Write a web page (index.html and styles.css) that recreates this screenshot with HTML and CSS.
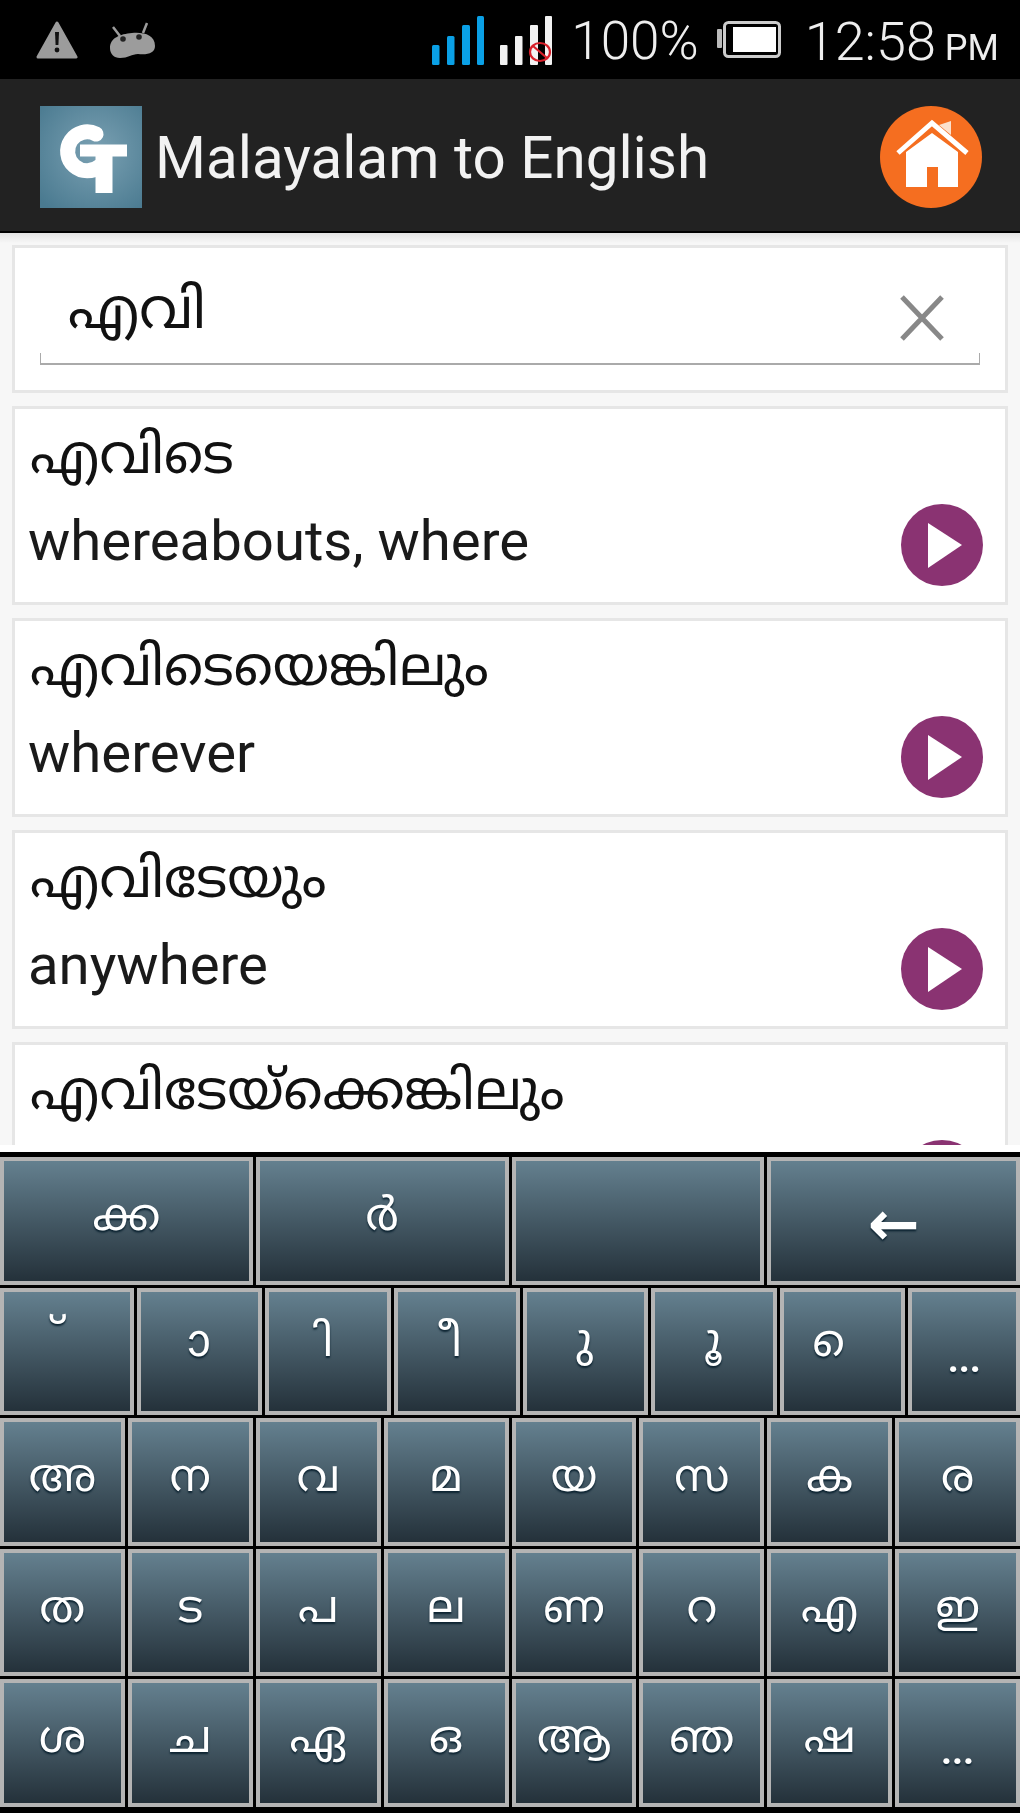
FILE: index.html
```html
<!DOCTYPE html>
<html lang="ml">
<head>
  <meta charset="UTF-8" />
  <meta name="viewport" content="width=device-width, initial-scale=1.0"/>
  <title>Malayalam to English</title>
  <link rel="stylesheet" href="styles.css">
</head>
<body>
  <div class="phone">

    <!-- Android status bar -->
    <div class="status-bar">
      <div class="status-left">
        <svg class="icon-warn" viewBox="0 0 42 38">
          <path d="M21 2 L40 36 H2 Z" fill="#9c9c9c" stroke="#9c9c9c" stroke-width="3" stroke-linejoin="round"/>
          <path d="M19 11 H23 L22.4 24 H19.6 Z" fill="#111"/>
          <circle cx="21" cy="29" r="2.4" fill="#111"/>
        </svg>
        <svg class="icon-android" viewBox="0 0 46 36">
          <path d="M3 5 L10 14 M37 1 L33 11" stroke="#9c9c9c" stroke-width="2.5"/>
          <path d="M0 26 C0 16 10 12 22 11 C34 10 45 13 45 24 C45 31 38 33 28 32 C22 32 18 36 10 36 C4 36 0 32 0 26 Z" fill="#9c9c9c"/>
          <circle cx="13" cy="17" r="2.8" fill="#222"/>
          <circle cx="29" cy="15" r="2.8" fill="#222"/>
        </svg>
      </div>
      <div class="status-right">
        <svg class="icon-signal" viewBox="0 0 52 50">
          <rect x="0" y="30" width="7.5" height="20" rx="1.5" fill="#0aa0e6"/>
          <rect x="15" y="21" width="7.5" height="29" rx="1.5" fill="#0aa0e6"/>
          <rect x="30" y="10" width="8" height="40" rx="1.5" fill="#0aa0e6"/>
          <rect x="45" y="1" width="7" height="49" rx="1.5" fill="#0aa0e6"/>
        </svg>
        <svg class="icon-signal" viewBox="0 0 52 50">
          <rect x="0" y="30" width="7.5" height="20" rx="1" fill="#f2f2f2"/>
          <rect x="15" y="21" width="7.5" height="29" rx="1" fill="#f2f2f2"/>
          <rect x="30" y="10" width="8" height="40" rx="1" fill="#f2f2f2"/>
          <rect x="45" y="1" width="7" height="49" rx="1" fill="#f2f2f2"/>
          <ellipse cx="40" cy="37" rx="10" ry="9" fill="none" stroke="#d8202a" stroke-width="2.2"/>
          <path d="M33 31 L47 43" stroke="#d8202a" stroke-width="2.2"/>
        </svg>
        <span class="status-pct">100%</span>
        <svg class="icon-battery" viewBox="0 0 64 37">
          <rect x="0" y="8" width="5" height="19" rx="1" fill="#bbb"/>
          <rect x="7.5" y="1.5" width="55" height="34" rx="4" fill="none" stroke="#ccc" stroke-width="3"/>
          <rect x="16" y="6" width="43" height="25" fill="#fff"/>
        </svg>
        <span class="status-time">12:58<small>PM</small></span>
      </div>
    </div>

    <!-- Action bar with logo, title and home button -->
    <div class="action-bar">
      <svg class="logo" viewBox="0 0 102 102">
        <defs>
          <radialGradient id="logoBg" cx="55%" cy="45%" r="72%">
            <stop offset="0" stop-color="#7ba1b3"/>
            <stop offset="1" stop-color="#4a7a90"/>
          </radialGradient>
        </defs>
        <rect width="102" height="102" fill="url(#logoBg)"/>
        <path d="M56 28 A19.5 19.5 0 1 0 60 60" fill="none" stroke="#fff" stroke-width="15" stroke-linecap="round"/>
        <path d="M40 44.5 H87" stroke="#fff" stroke-width="12"/>
        <path d="M64 44 V87" stroke="#fff" stroke-width="17"/>
      </svg>
      <div class="app-title">Malayalam to English</div>
      <svg class="home-btn" viewBox="0 0 102 102">
        <circle cx="51" cy="51" r="51" fill="#f56e20"/>
        <path d="M59 19 L71 15 V29 Z" fill="#fbe0cc"/>
        <path d="M18 47 L52 17 L87 47" fill="none" stroke="#fff" stroke-width="5"/>
        <path d="M26 46 L52 27 L78 46 V81 H58 V61 H47 V81 H26 Z" fill="#fff"/>
      </svg>
    </div>

    <!-- Search box and results list -->
    <div class="content">
      <div class="search-card">
        <div class="search-field">
          <span class="search-text">എവി</span>
          <svg class="clear-btn" viewBox="0 0 44 46">
            <path d="M2 2 L42 44 M42 2 L2 44" stroke="#888" stroke-width="5"/>
          </svg>
        </div>
      </div>

      <div class="word-card">
        <div class="word-ml">എവിടെ</div>
        <div class="word-row">
          <div class="word-en">whereabouts, where</div>
          <svg class="play-btn" viewBox="0 0 82 82"><circle cx="41" cy="41" r="41" fill="#8a3372"/><path d="M27 19 L61 41 L27 64 Z" fill="#fff"/></svg>
        </div>
      </div>

      <div class="word-card">
        <div class="word-ml">എവിടെയെങ്കിലും</div>
        <div class="word-row">
          <div class="word-en">wherever</div>
          <svg class="play-btn" viewBox="0 0 82 82"><circle cx="41" cy="41" r="41" fill="#8a3372"/><path d="M27 19 L61 41 L27 64 Z" fill="#fff"/></svg>
        </div>
      </div>

      <div class="word-card">
        <div class="word-ml">എവിടേയും</div>
        <div class="word-row">
          <div class="word-en">anywhere</div>
          <svg class="play-btn" viewBox="0 0 82 82"><circle cx="41" cy="41" r="41" fill="#8a3372"/><path d="M27 19 L61 41 L27 64 Z" fill="#fff"/></svg>
        </div>
      </div>

      <div class="word-card">
        <div class="word-ml">എവിടേയ്ക്കെങ്കിലും</div>
        <div class="word-row">
          <div class="word-en"></div>
          <svg class="play-btn" viewBox="0 0 82 82"><circle cx="41" cy="41" r="41" fill="#8a3372"/><path d="M27 19 L61 41 L27 64 Z" fill="#fff"/></svg>
        </div>
      </div>
    </div>

    <!-- Malayalam on-screen keyboard -->
    <div class="keyboard">
      <div class="key-row">
        <div class="key">ക്ക</div>
        <div class="key">ർ</div>
        <div class="key"></div>
        <div class="key key-arrow">←</div>
      </div>
      <div class="key-row">
        <div class="key key-mark key-virama">&nbsp;്</div>
        <div class="key key-mark">&nbsp;ാ</div>
        <div class="key key-mark">&nbsp;ി</div>
        <div class="key key-mark">&nbsp;ീ</div>
        <div class="key key-mark">&nbsp;ു</div>
        <div class="key key-mark">&nbsp;ൂ</div>
        <div class="key key-mark">&nbsp;െ</div>
        <div class="key key-more">...</div>
      </div>
      <div class="key-row">
        <div class="key">അ</div>
        <div class="key">ന</div>
        <div class="key">വ</div>
        <div class="key">മ</div>
        <div class="key">യ</div>
        <div class="key">സ</div>
        <div class="key">ക</div>
        <div class="key">ര</div>
      </div>
      <div class="key-row">
        <div class="key">ത</div>
        <div class="key">ട</div>
        <div class="key">പ</div>
        <div class="key">ല</div>
        <div class="key">ണ</div>
        <div class="key">റ</div>
        <div class="key">എ</div>
        <div class="key">ഇ</div>
      </div>
      <div class="key-row">
        <div class="key">ശ</div>
        <div class="key">ച</div>
        <div class="key">ഏ</div>
        <div class="key">ഒ</div>
        <div class="key">ആ</div>
        <div class="key">ഞ</div>
        <div class="key">ഷ</div>
        <div class="key key-more">...</div>
      </div>
    </div>

  </div>
</body>
</html>
```

FILE: styles.css
```css
* { box-sizing: border-box; }

body {
  margin: 0;
  font-family: Roboto, "Noto Sans", "Noto Sans Malayalam", "DejaVu Sans", sans-serif;
  background: #000;
}

/* The screenshot is an upscaled capture, so everything is slightly soft */
.phone {
  width: 1020px;
  height: 1813px;
  display: flex;
  flex-direction: column;
  overflow: hidden;
  filter: blur(0.6px);
}

/* Status bar */
.status-bar {
  height: 79px;
  flex-shrink: 0;
  background: #000;
  color: #eee;
  display: flex;
  align-items: center;
  justify-content: space-between;
  padding: 0 21px 0 36px;
}

.status-left {
  display: flex;
  align-items: center;
  gap: 32px;
}

.icon-warn { width: 42px; height: 38px; }
.icon-android { width: 46px; height: 36px; }

.status-right {
  display: flex;
  align-items: center;
}

.icon-signal {
  width: 52px;
  height: 50px;
  margin-right: 16px;
}

.status-pct {
  font-size: 53px;
  font-weight: 300;
  margin-left: 3px;
  padding-top: 4px;
  line-height: 1;
}

.icon-battery {
  width: 64px;
  height: 37px;
  margin-left: 18px;
}

.status-time {
  font-size: 54px;
  font-weight: 300;
  margin-left: 24px;
  padding-top: 4px;
  line-height: 1;
}

.status-time small {
  font-size: 36px;
  font-weight: 400;
  margin-left: 9px;
}

/* Action bar */
.action-bar {
  height: 154px;
  flex-shrink: 0;
  background: #222;
  border-bottom: 2px solid #000;
  display: flex;
  align-items: center;
  padding: 3px 38px 0 40px;
}

.logo {
  width: 102px;
  height: 102px;
}

.app-title {
  flex: 1;
  margin-left: 13px;
  padding-top: 3px;
  font-size: 58.4px;
  color: #f2f2f2;
}

.home-btn {
  width: 102px;
  height: 102px;
}

/* Results area */
.content {
  height: 919px;
  flex-shrink: 0;
  background: linear-gradient(to bottom, #e2e2e2, #f7f7f7 10px);
  padding: 12px 12px 0;
  display: flex;
  flex-direction: column;
  gap: 13px;
  overflow: hidden;
  border-bottom: 7px solid #fff;
}

.search-card {
  height: 148px;
  flex-shrink: 0;
  background: #fff;
  border: 3px solid #e6e6e6;
  padding: 0 25px;
}

.search-field {
  height: 117px;
  display: flex;
  align-items: center;
  justify-content: space-between;
  padding: 24px 36px 0 28px;
  border-bottom: 2px solid #aaa;
  position: relative;
}

.search-field::before,
.search-field::after {
  content: "";
  position: absolute;
  bottom: 0;
  width: 1px;
  height: 10px;
  background: #aaa;
}
.search-field::before { left: 0; }
.search-field::after { right: 0; }

.search-text {
  font-size: 56px;
  line-height: 70px;
  margin-top: -18px;
  color: #111;
}

.clear-btn {
  width: 44px;
  height: 46px;
}

.word-card {
  height: 199px;
  flex-shrink: 0;
  background: #fff;
  border: 3px solid #e6e6e6;
  padding: 10px 22px 0 15px;
}

.word-ml {
  font-size: 54.5px;
  line-height: 70px;
  color: #111;
}

.word-row {
  display: flex;
  align-items: center;
  justify-content: space-between;
  margin-top: 15px;
}

.word-en {
  font-size: 56.3px;
  line-height: 66px;
  padding-bottom: 8px;
  margin-left: -2px;
  color: #1a1a1a;
}

.play-btn {
  width: 82px;
  height: 82px;
}

/* Keyboard */
.keyboard {
  flex: 1;
  background: #000;
  padding-top: 5px;
  display: flex;
  flex-direction: column;
  gap: 3px;
}

.key-row {
  display: flex;
  gap: 3px;
  height: 127.5px;
}

.key {
  flex: 1;
  min-width: 0;
  display: flex;
  align-items: center;
  justify-content: center;
  border: 4px solid #b4b4b4;
  background: linear-gradient(to bottom, #64808f, #24313a);
  color: #fff;
  font-size: 45px;
  padding-bottom: 6px;
  text-shadow: 0 2px 2px #0b2230;
}

.key-arrow {
  font-size: 62px;
  font-weight: 700;
  padding: 6px 0 0;
}

.key-mark {
  padding: 0 14px 16px 0;
}

.key-virama {
  padding: 0 22px 26px 0;
}

.key-more {
  font-size: 38px;
  font-weight: 700;
  padding: 16px 0 0;
}
```
